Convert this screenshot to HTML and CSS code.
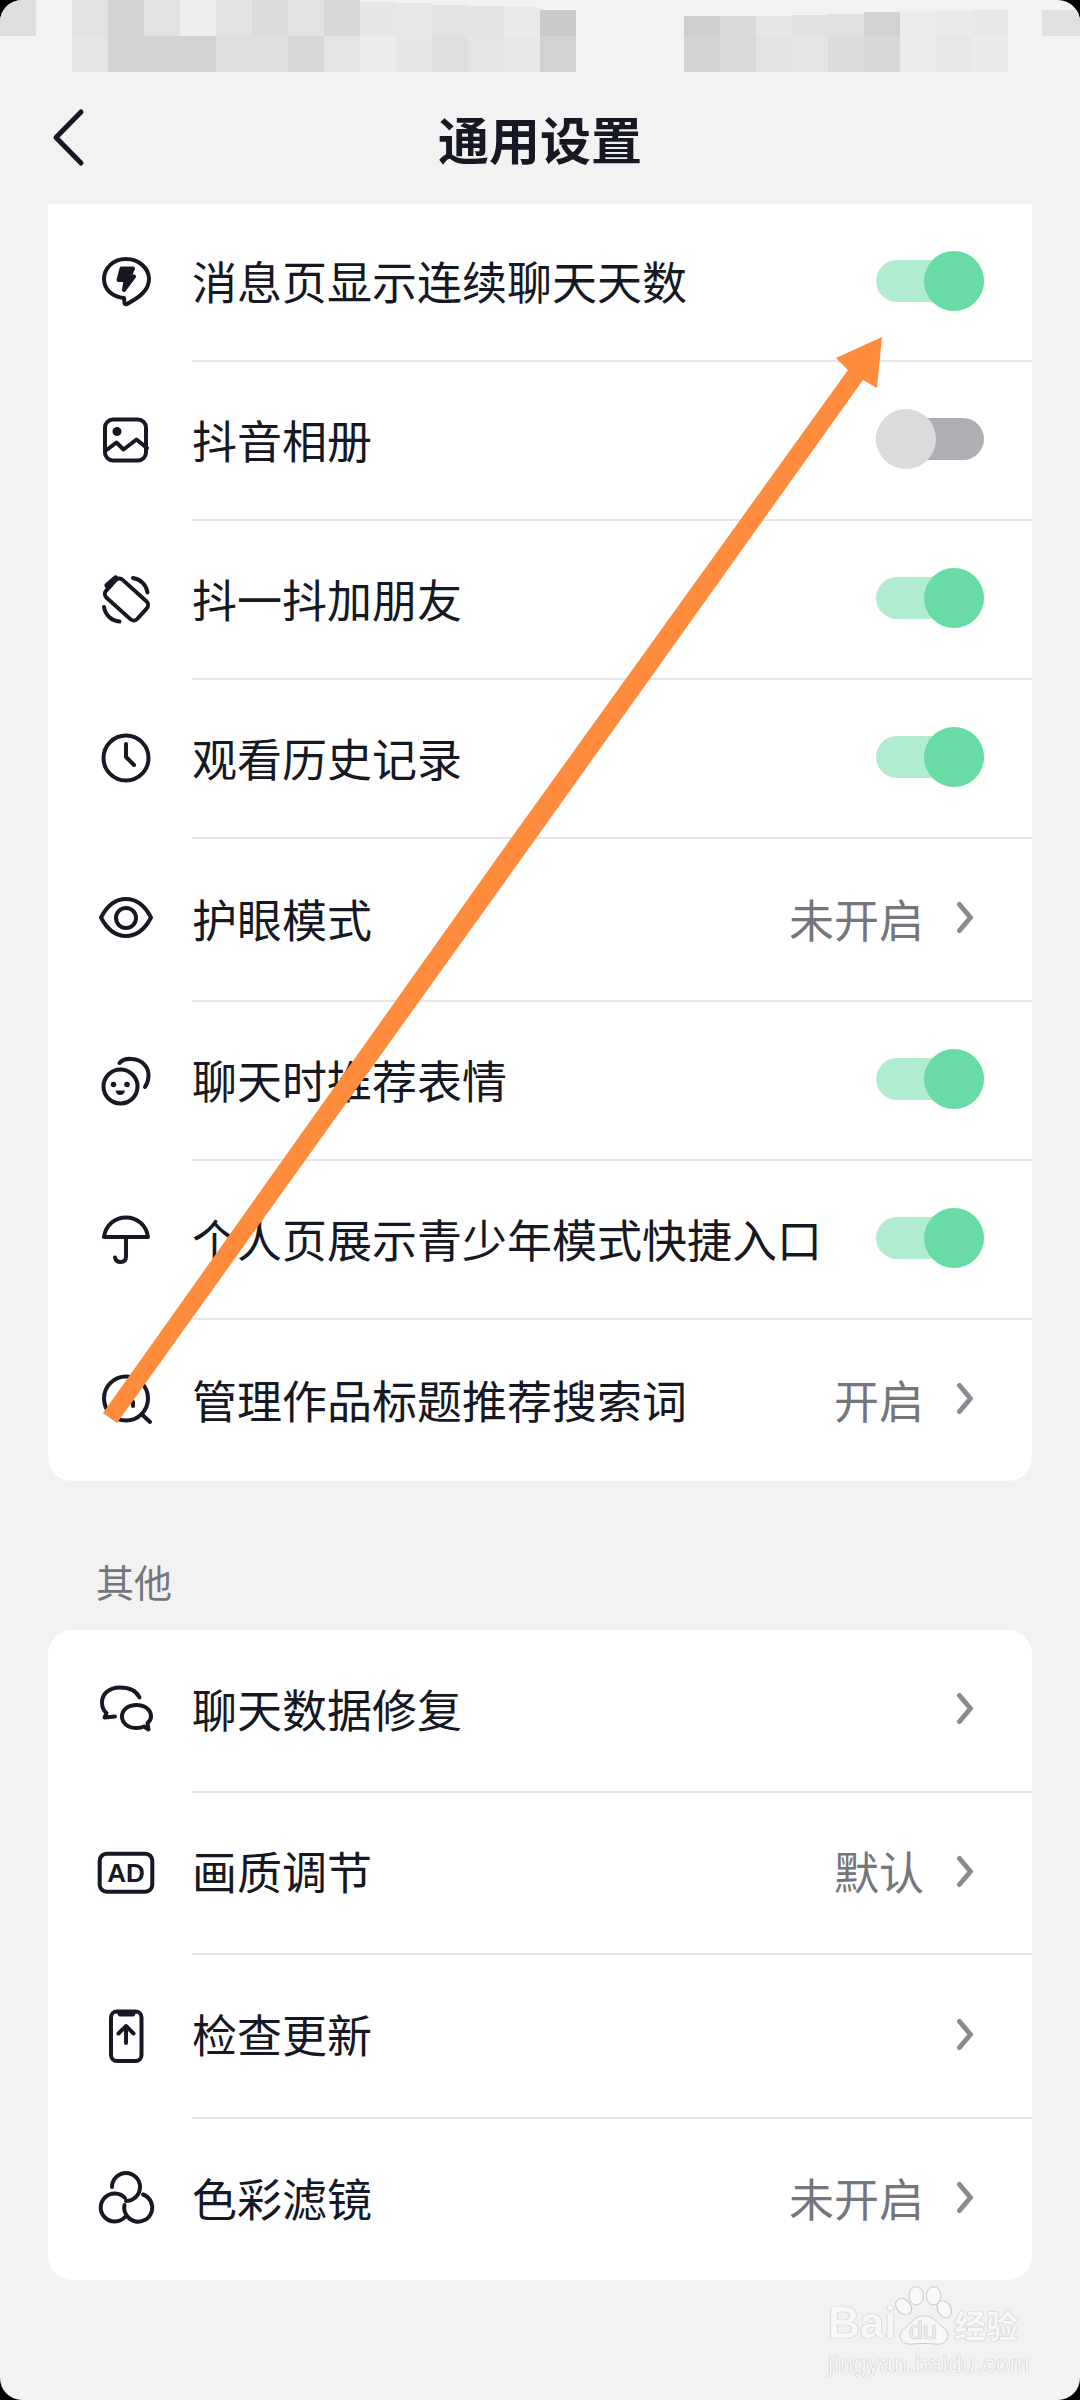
FILE: index.html
```html
<!DOCTYPE html>
<html lang="zh-CN">
<head>
  <meta charset="UTF-8">
  <title>通用设置</title>
  <meta name="viewport" content="width=device-width, initial-scale=1.0">
  <link rel="stylesheet" href="styles.css">
</head>
<body>
  <div class="screen">
    <!-- status bar, pixelated in the source -->
    <svg class="mosaic" viewBox="0 0 1080 72">
      <rect x="0" y="0" width="36" height="36" fill="#dedede"/>
      <rect x="72" y="0" width="36" height="36" fill="#e2e2e2"/>
      <rect x="108" y="0" width="36" height="36" fill="#d2d2d2"/>
      <rect x="144" y="0" width="36" height="36" fill="#e2e2e2"/>
      <rect x="180" y="0" width="36" height="36" fill="#eeeeee"/>
      <rect x="216" y="0" width="36" height="36" fill="#e3e3e3"/>
      <rect x="252" y="0" width="36" height="36" fill="#dcdcdc"/>
      <rect x="288" y="0" width="36" height="36" fill="#e2e2e2"/>
      <rect x="324" y="0" width="36" height="36" fill="#d8d8d8"/>
      <rect x="360" y="2" width="36" height="34" fill="#e6e6e6"/>
      <rect x="396" y="3" width="36" height="33" fill="#e7e7e7"/>
      <rect x="432" y="5" width="36" height="31" fill="#e3e3e3"/>
      <rect x="468" y="6" width="36" height="30" fill="#e3e3e3"/>
      <rect x="504" y="7" width="36" height="29" fill="#eaeaea"/>
      <rect x="72" y="36" width="36" height="36" fill="#e4e4e4"/>
      <rect x="108" y="36" width="36" height="36" fill="#d3d3d3"/>
      <rect x="144" y="36" width="72" height="36" fill="#d3d3d3"/>
      <rect x="216" y="36" width="72" height="36" fill="#dfdfdf"/>
      <rect x="288" y="36" width="36" height="36" fill="#d7d7d7"/>
      <rect x="324" y="36" width="36" height="36" fill="#e4e4e4"/>
      <rect x="360" y="36" width="36" height="36" fill="#ececec"/>
      <rect x="396" y="36" width="36" height="36" fill="#e6e6e6"/>
      <rect x="432" y="36" width="36" height="36" fill="#dfdfdf"/>
      <rect x="468" y="36" width="36" height="36" fill="#e4e4e4"/>
      <rect x="504" y="36" width="36" height="36" fill="#e8e8e8"/>
      <rect x="540" y="10" width="36" height="26" fill="#cbcbcb"/>
      <rect x="684" y="16" width="36" height="20" fill="#cecece"/>
      <rect x="720" y="16" width="36" height="20" fill="#dadada"/>
      <rect x="756" y="16" width="36" height="20" fill="#e6e6e6"/>
      <rect x="792" y="15" width="36" height="21" fill="#e0e0e0"/>
      <rect x="828" y="14" width="36" height="22" fill="#e0e0e0"/>
      <rect x="864" y="12" width="36" height="24" fill="#d2d2d2"/>
      <rect x="900" y="11" width="36" height="25" fill="#ececec"/>
      <rect x="936" y="11" width="36" height="25" fill="#e9e9e9"/>
      <rect x="972" y="10" width="36" height="26" fill="#e8e8e8"/>
      <rect x="1042" y="10" width="38" height="26" fill="#e0e0e0"/>
      <rect x="540" y="36" width="36" height="36" fill="#d2d2d2"/>
      <rect x="684" y="36" width="36" height="36" fill="#d2d2d2"/>
      <rect x="720" y="36" width="36" height="36" fill="#d9d9d9"/>
      <rect x="756" y="36" width="36" height="36" fill="#e3e3e3"/>
      <rect x="792" y="36" width="36" height="36" fill="#e4e4e4"/>
      <rect x="828" y="36" width="36" height="36" fill="#dddddd"/>
      <rect x="864" y="36" width="36" height="36" fill="#d8d8d8"/>
      <rect x="900" y="36" width="36" height="36" fill="#ebebeb"/>
      <rect x="936" y="36" width="36" height="36" fill="#e7e7e7"/>
      <rect x="972" y="36" width="36" height="36" fill="#eaeaea"/>
    </svg>

    <header class="topbar">
      <svg class="back" viewBox="0 0 40 60"><path d="M31 4L6 29.500L31 55"/></svg>
      <h1>通用设置</h1>
    </header>

    <section class="card card-flat">
      <div class="row row-first">
        <svg class="icon" viewBox="0 0 60 60">
          <path d="M30 6C17.500 6 8 15 8 26C8 37 17 44 28 45L28.500 50Q29 52 31 51C42 45 53 38 53 26C53 15 42.500 6 30 6Z"/>
          <path class="solid" d="M25.500 15.500H37L33.500 23.500H38L28 37L29.500 27H22.500Z"/>
        </svg>
        <div class="row-main">
          <span class="label">消息页显示连续聊天天数</span>
          <span class="toggle"><i class="knob"></i></span>
        </div>
      </div>
      <div class="row">
        <svg class="icon" viewBox="0 0 60 60">
          <rect x="9" y="8.500" width="41" height="41" rx="8"/>
          <circle class="solid" cx="21" cy="20.500" r="2.500"/>
          <path d="M10.500 39L20.500 31.500L27.500 38.500L40.500 28.500L51 37"/>
        </svg>
        <div class="row-main">
          <span class="label">抖音相册</span>
          <span class="toggle toggle-off"><i class="knob"></i></span>
        </div>
      </div>
      <div class="row">
        <svg class="icon" viewBox="0 0 60 60">
          <rect x="9.500" y="17.500" width="42" height="24" rx="5" transform="rotate(42 30.500 29.500)"/>
          <path d="M37 8A17 17 0 0 1 51.500 22.500"/>
          <path d="M8 37A17 17 0 0 0 23.500 51.500"/>
          <path d="M19.500 8.500L11.500 15.500" class="thick"/>
        </svg>
        <div class="row-main">
          <span class="label">抖一抖加朋友</span>
          <span class="toggle"><i class="knob"></i></span>
        </div>
      </div>
      <div class="row">
        <svg class="icon" viewBox="0 0 60 60">
          <circle cx="30" cy="29" r="22.500"/>
          <path d="M30 15V28L38 36"/>
        </svg>
        <div class="row-main">
          <span class="label">观看历史记录</span>
          <span class="toggle"><i class="knob"></i></span>
        </div>
      </div>
      <div class="row row-tall">
        <svg class="icon" viewBox="0 0 60 60">
          <path d="M5 27.500C12 14 20 9 30 9C40 9 48 14 55 27.500C48 41 40 46 30 46C20 46 12 41 5 27.500Z"/>
          <circle cx="30" cy="28" r="10"/>
        </svg>
        <div class="row-main">
          <span class="label">护眼模式</span>
          <span class="value">未开启</span>
          <svg class="chevron" viewBox="0 0 28 40"><path d="M3.500 6.500L14.500 19.500L3.500 32.500"/></svg>
        </div>
      </div>
      <div class="row">
        <svg class="icon" viewBox="0 0 60 60">
          <circle cx="24.500" cy="35.500" r="17"/>
          <path d="M23.500 12C26 9 31 7.500 36 8C46 8.500 53 16 52.500 25C52.500 29 51 33 49 36"/>
          <circle class="solid-flat" cx="17.500" cy="33.500" r="2.800"/>
          <circle class="solid-flat" cx="31" cy="33.500" r="2.800"/>
          <path class="solid-flat" d="M19.500 39.500H29Q28 44 24.200 44Q20.500 44 19.500 39.500Z"/>
        </svg>
        <div class="row-main">
          <span class="label">聊天时推荐表情</span>
          <span class="toggle"><i class="knob"></i></span>
        </div>
      </div>
      <div class="row">
        <svg class="icon" viewBox="0 0 60 60">
          <path d="M8 27H52C50.500 15 41 7.500 30 7.500C19 7.500 9.500 15 8 27Z"/>
          <path d="M30 27V46.500C30 50 28 52 24.500 52C21 52 19.500 50 19 47.500"/>
        </svg>
        <div class="row-main">
          <span class="label">个人页展示青少年模式快捷入口</span>
          <span class="toggle"><i class="knob"></i></span>
        </div>
      </div>
      <div class="row row-last">
        <svg class="icon" viewBox="0 0 60 60">
          <circle cx="30" cy="28.500" r="22"/>
          <path d="M45.500 44L54 52"/>
          <path d="M37 32V36"/>
        </svg>
        <div class="row-main">
          <span class="label">管理作品标题推荐搜索词</span>
          <span class="value">开启</span>
          <svg class="chevron" viewBox="0 0 28 40"><path d="M3.500 6.500L14.500 19.500L3.500 32.500"/></svg>
        </div>
      </div>
    </section>

    <h2 class="section-title">其他</h2>

    <section class="card card-other">
      <div class="row row-tall">
        <svg class="icon" viewBox="0 0 60 60">
          <path d="M43.500 16.500C40 9 32.500 6.500 24 6.500C13 6.500 6 13 6 21.500C6 26.500 8 30 10.500 32L8.500 36.500L19 35.500"/>
          <path d="M40.500 24C32 24 26 29 26 35.500C26 42 32 47 40.500 47C43.500 47 46 46.500 48 45.500L52.500 48.500L51.500 42C54 40 55 38 55 35.500C55 29 49 24 40.500 24Z"/>
        </svg>
        <div class="row-main">
          <span class="label">聊天数据修复</span>
          <svg class="chevron chevron-only" viewBox="0 0 28 40"><path d="M3.500 6.500L14.500 19.500L3.500 32.500"/></svg>
        </div>
      </div>
      <div class="row row-mid">
        <svg class="icon" viewBox="0 0 60 60">
          <rect x="3.700" y="9.700" width="52.600" height="38" rx="7"/>
          <text class="icon-text" x="30" y="38">AD</text>
        </svg>
        <div class="row-main">
          <span class="label">画质调节</span>
          <span class="value">默认</span>
          <svg class="chevron" viewBox="0 0 28 40"><path d="M3.500 6.500L14.500 19.500L3.500 32.500"/></svg>
        </div>
      </div>
      <div class="row row-taller">
        <svg class="icon" viewBox="0 0 60 60">
          <rect x="15" y="4.500" width="30.500" height="49.500" rx="6"/>
          <path class="solid" d="M23 5.500H38L37 7.500H24Z"/>
          <path d="M30 36V19M22.500 26.500L30 19L37.500 26.500"/>
        </svg>
        <div class="row-main">
          <span class="label">检查更新</span>
          <svg class="chevron chevron-only" viewBox="0 0 28 40"><path d="M3.500 6.500L14.500 19.500L3.500 32.500"/></svg>
        </div>
      </div>
      <div class="row row-last">
        <svg class="icon" viewBox="0 0 60 60">
          <path d="M16 18A14 14 0 1 1 30 32"/>
          <path d="M29 29A14 14 0 1 0 29 48"/>
          <path d="M47 25.500A14 14 0 1 1 28.500 36"/>
        </svg>
        <div class="row-main">
          <span class="label">色彩滤镜</span>
          <span class="value">未开启</span>
          <svg class="chevron" viewBox="0 0 28 40"><path d="M3.500 6.500L14.500 19.500L3.500 32.500"/></svg>
        </div>
      </div>
    </section>

    <!-- annotation drawn on top of the screenshot -->
    <svg class="annotation" viewBox="0 0 1080 2400">
      <polygon points="882,337 877,388 863,380 537,837 117,1423 103,1413 512,837 848,370 836,358"/>
    </svg>

    <div class="watermark">
      <div class="wm-top">
        <span class="wm-bai">Bai</span>
        <span class="wm-paw">
          <svg viewBox="0 0 60 72" preserveAspectRatio="none">
            <ellipse cx="23" cy="13" rx="7.500" ry="11"/>
            <ellipse cx="41" cy="13" rx="7.500" ry="11"/>
            <ellipse cx="10" cy="26" rx="7.500" ry="10.500" transform="rotate(-30 10 26)"/>
            <ellipse cx="52" cy="29" rx="7" ry="10.500" transform="rotate(-20 52 29)"/>
            <path d="M31 37C41 37 45 46 52 52C60 60 54 72 44 71C36 70 26 70 18 71C7 72 2 60 11 52C18 46 21 37 31 37Z"/>
          </svg>
          <span class="wm-du">du</span>
        </span>
        <span class="wm-jy">经验</span>
      </div>
      <div class="wm-url">jingyan.baidu.com</div>
    </div>
  </div>
</body>
</html>
```

FILE: styles.css
```css
* {
  margin: 0;
  padding: 0;
  box-sizing: border-box;
}

body {
  background: #000;
  font-family: "Noto Sans CJK SC", "Noto Sans", sans-serif;
  color: #161823;
}

.screen {
  position: relative;
  width: 1080px;
  height: 2400px;
  overflow: hidden;
  padding: 0 48px;
  background: #f2f2f2;
  border-radius: 22px;
}

.mosaic {
  display: block;
  width: 1080px;
  height: 72px;
  margin-left: -48px;
  filter: blur(0.6px);
}

/* header */
.topbar {
  display: grid;
  grid-template-columns: 1fr auto 1fr;
  align-items: center;
  height: 132px;
}

.back {
  width: 40px;
  height: 60px;
  margin-left: 2px;
  fill: none;
  stroke: #161823;
  stroke-width: 5;
  stroke-linecap: round;
  stroke-linejoin: round;
}

.topbar h1 {
  font-size: 51px;
  line-height: 60px;
  font-weight: 700;
}

/* cards */
.card {
  background: #fff;
  border-radius: 24px;
}

.card-flat {
  border-radius: 0 0 24px 24px;
}

.row {
  display: flex;
  align-items: center;
  height: 159px;
  padding-left: 48px;
}

.row-first {
  height: 158px;
}

.row-mid {
  height: 162px;
}

.row-tall {
  height: 163px;
}

.row-taller {
  height: 164px;
}

.row-last {
  height: 161px;
}

.row-main {
  flex: 1;
  display: flex;
  align-items: center;
  height: 100%;
  margin-left: 36px;
  padding-right: 48px;
  padding-bottom: 3px;
  border-bottom: 2px solid #e6e6e8;
}

.row-last .row-main {
  border-bottom: none;
}

.label {
  font-size: 45px;
  white-space: nowrap;
}

.card-other .label,
.card-other .value {
  margin-bottom: 2px;
}

.value {
  margin-left: auto;
  font-size: 45px;
  color: #75767c;
}

/* icons */
.icon {
  flex-shrink: 0;
  width: 60px;
  height: 60px;
  margin-bottom: 1px;
  fill: none;
  stroke: #161823;
  stroke-width: 4;
  stroke-linecap: round;
  stroke-linejoin: round;
}

.icon .solid {
  fill: #161823;
}

.icon .solid-flat {
  fill: #161823;
  stroke: none;
}

.icon .thick {
  stroke-width: 6;
}

.icon .icon-text {
  font-family: "Liberation Sans", sans-serif;
  font-size: 26px;
  font-weight: 700;
  text-anchor: middle;
  fill: #161823;
  stroke: none;
}

.chevron {
  flex-shrink: 0;
  width: 28px;
  height: 40px;
  margin-left: 32px;
  fill: none;
  stroke: #8a8b90;
  stroke-width: 5;
  stroke-linecap: round;
  stroke-linejoin: round;
}

.chevron-only {
  margin-left: auto;
}

/* switches */
.toggle {
  flex-shrink: 0;
  display: flex;
  align-items: center;
  width: 108px;
  height: 42px;
  margin-left: auto;
  border-radius: 21px;
  background: #b0edd0;
}

.knob {
  flex-shrink: 0;
  width: 60px;
  height: 60px;
  margin-left: 48px;
  border-radius: 50%;
  background: #69dba4;
}

.toggle-off {
  background: #afafb3;
}

.toggle-off .knob {
  margin-left: 0;
  background: #dbdbde;
}

.section-title {
  height: 149px;
  padding: 76px 0 0 48px;
  font-size: 38px;
  line-height: 48px;
  font-weight: 400;
  color: #75767c;
}

/* overlays */
.annotation {
  position: absolute;
  top: 0;
  left: 0;
  width: 1080px;
  height: 2400px;
  fill: #ff8c3c;
}

.watermark {
  position: absolute;
  top: 2285px;
  left: 828px;
  width: 200px;
  color: #f8f8f8;
  text-shadow: 0 0 1px #b8b8b8, 0 0 1px #b8b8b8;
}

.wm-top {
  display: flex;
  align-items: flex-end;
  height: 60px;
  white-space: nowrap;
}

.wm-bai {
  width: 66px;
  font-family: "Liberation Sans", sans-serif;
  font-size: 44px;
  line-height: 44px;
  font-weight: 700;
}

.wm-paw {
  position: relative;
  flex-shrink: 0;
  width: 58px;
  height: 60px;
}

.wm-paw svg {
  display: block;
  width: 58px;
  height: 60px;
  fill: #f8f8f8;
  stroke: #c4c4c4;
  stroke-width: 1;
}

.wm-du {
  position: absolute;
  left: 15px;
  bottom: 1px;
  font-family: "Liberation Sans", sans-serif;
  font-size: 25px;
  line-height: 28px;
  color: #ededed;
}

.wm-jy {
  flex-shrink: 0;
  margin-left: 2px;
  font-size: 32px;
  line-height: 42px;
  font-weight: 700;
}

.wm-url {
  margin-top: 3px;
  font-family: "Liberation Sans", sans-serif;
  font-size: 24px;
  line-height: 32px;
  letter-spacing: 0.5px;
  white-space: nowrap;
}
```
